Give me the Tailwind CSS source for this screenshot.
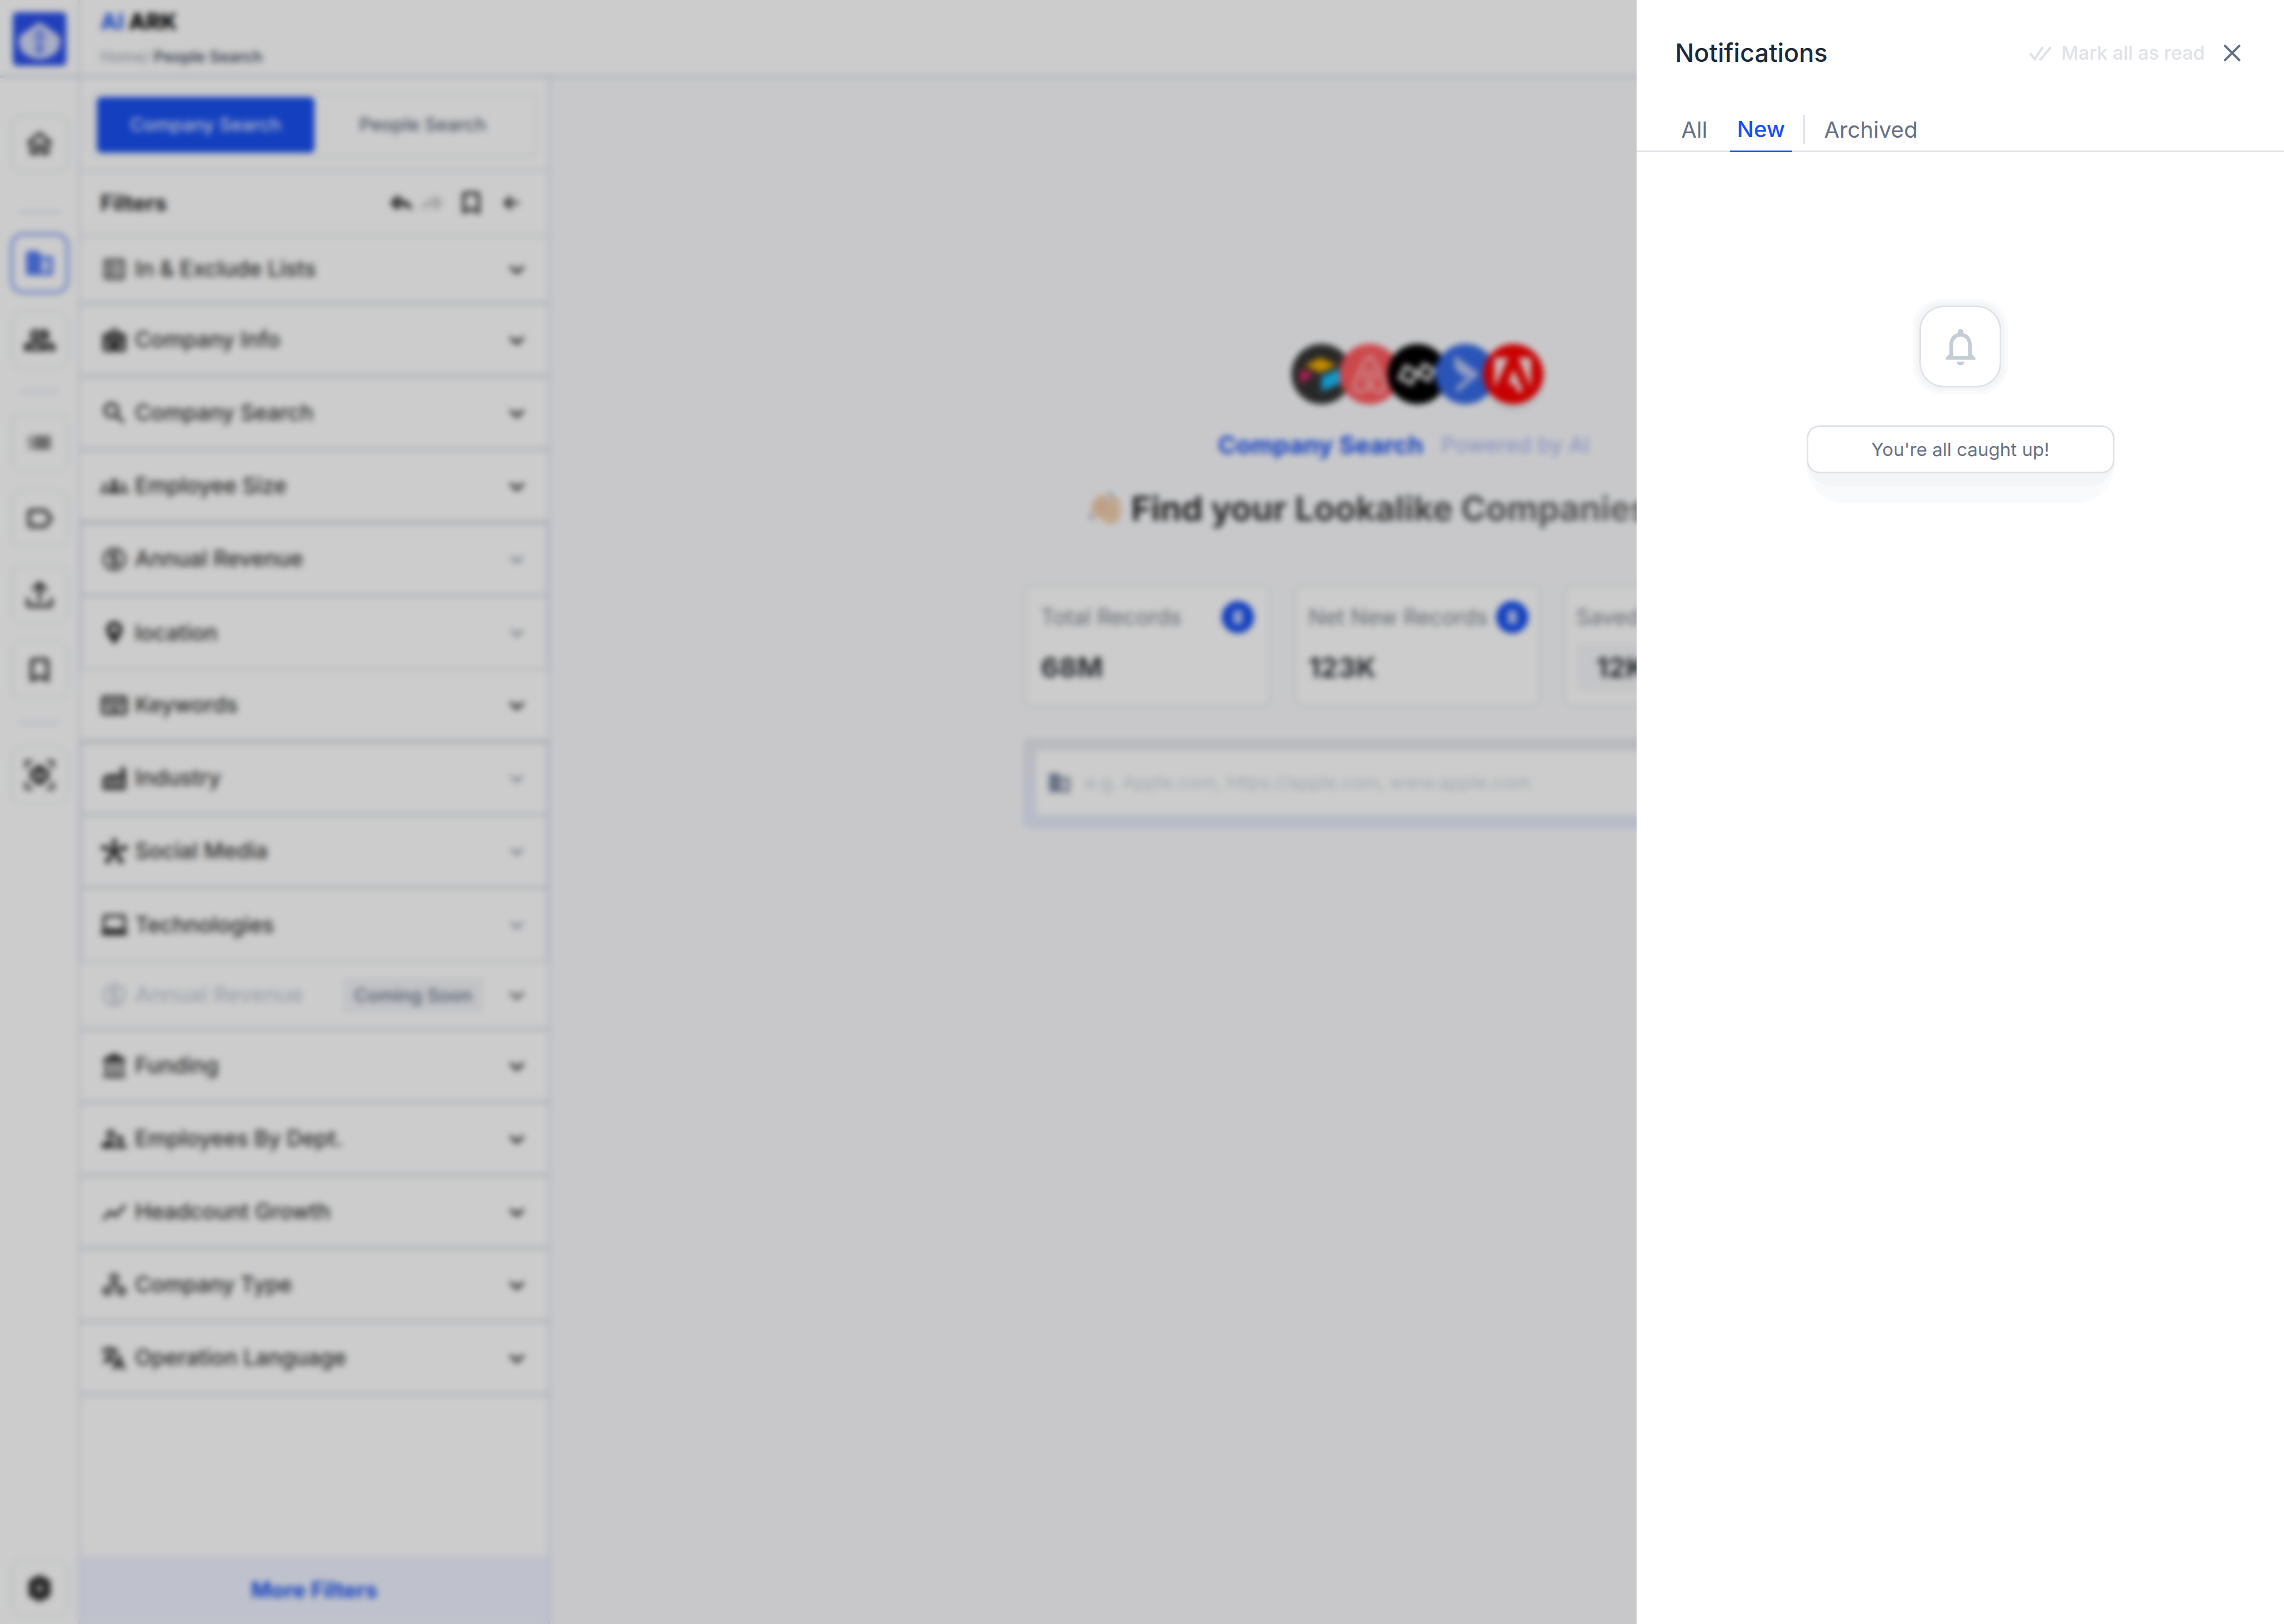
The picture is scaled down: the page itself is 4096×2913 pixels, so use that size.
<!DOCTYPE html>
<html lang="en">

<head>
  <meta charset="UTF-8">
  <meta name="viewport" content="width=device-width, initial-scale=1.0">
  <title>AI ARK - Notifications</title>
  <script src="https://cdn.jsdelivr.net/npm/@tailwindcss/browser@4"></script>
</head>

<body class="font-['Inter','Liberation_Sans',sans-serif] text-[#333]">
  <!-- Icon sprite -->
  <svg class="hidden" aria-hidden="true">
    <symbol id="i-home" viewBox="0 0 24 24"><path d="M12 5.700l5 4.500V18h-2v-6H9v6H7v-7.800l5-4.500M12 3L3 10.500V12h2v8h6v-6h2v6h6v-8h2v-1.500L12 3z" stroke="currentColor" stroke-width=".3"/></symbol>
    <symbol id="i-company" viewBox="0 0 24 24"><path d="M12 7V3H2v18h20V7H12zM6 19H4v-2h2v2zm0-4H4v-2h2v2zm0-4H4V9h2v2zm0-4H4V5h2v2zm4 12H8v-2h2v2zm0-4H8v-2h2v2zm0-4H8V9h2v2zm0-4H8V5h2v2zm10 12h-8v-2h2v-2h-2v-2h2v-2h-2V9h8v10zm-2-8h-2v2h2v-2zm0 4h-2v2h2v-2z"/></symbol>
    <symbol id="i-people" viewBox="0 0 24 24"><path d="M9 4a4 4 0 1 0 0 8 4 4 0 0 0 0-8zm0 2a2 2 0 1 1 0 4 2 2 0 0 1 0-4zm0 7c-3 0-9 1.500-9 4.500V20h18v-2.500C18 14.500 12 13 9 13zm-6.700 5c.5-1.200 3.700-3 6.700-3s6.200 1.800 6.700 3H2.300zM15 4c-.5 0-1 .1-1.400.3a6 6 0 0 1 0 7.400c.4.2.9.3 1.400.3a4 4 0 0 0 0-8zm2 9.300c1.700 1 3 2.300 3 4.200V20h4v-2.500c0-2.300-3.700-3.800-7-4.200z" stroke="currentColor" stroke-width=".8"/></symbol>
    <symbol id="i-list" viewBox="0 0 24 24"><path d="M3 13h2v-2H3v2zm0 4h2v-2H3v2zm0-8h2V7H3v2zm4 4h14v-2H7v2zm0 4h14v-2H7v2zM7 7v2h14V7H7z" stroke="currentColor" stroke-width=".3"/></symbol>
    <symbol id="i-tag" viewBox="0 0 24 24"><path d="M17.630 5.840C17.270 5.330 16.670 5 16 5L5 5.010C3.900 5.010 3 5.900 3 7v10c0 1.100.9 1.990 2 1.990L16 19c.67 0 1.270-.33 1.630-.84L22 12l-4.370-6.160zM16 17H5V7h11l3.550 5L16 17z" stroke="currentColor" stroke-width=".5"/></symbol>
    <symbol id="i-upload" viewBox="0 0 24 24"><path d="M20 15v5H4v-5H2v5c0 1.100.9 2 2 2h16c1.100 0 2-.9 2-2v-5h-2zM6 8l1.400 1.400L11 5.800V17h2V5.800l3.600 3.600L18 8l-6-6-6 6z" stroke="currentColor" stroke-width=".5"/></symbol>
    <symbol id="i-bookmark" viewBox="0 0 24 24"><path d="M17 3H7c-1.100 0-2 .9-2 2v16l7-3 7 3V5c0-1.100-.9-2-2-2zm0 15l-5-2.200L7 18V5h10v13z" stroke="currentColor" stroke-width=".6"/></symbol>
    <symbol id="i-scan" viewBox="0 0 24 24"><path d="M1 7V1h6v2H3v4H1zm16-6h6v6h-2V3h-4V1zM1 17h2v4h4v2H1v-6zm20 0h2v6h-6v-2h4v-4zM12 4.500a3 3 0 0 1 3 2.500l4 1v7l-7 5-7-5V8l4-1a3 3 0 0 1 3-2.500zm-4 5v4l3 2v-5L8 9.500zm8 0l-3 1v5l3-2v-4z" fill-rule="evenodd"/></symbol>
    <symbol id="i-settings" viewBox="0 0 24 24"><path d="M12 1.500l3.500 2 4 1.500 1 3.500v7l-1 3.500-4 1.500-3.500 2-3.500-2-4-1.500-1-3.500v-7l1-3.500 4-1.500 3.500-2zM12 10a2 2 0 1 0 0 4 2 2 0 0 0 0-4z" fill-rule="evenodd"/></symbol>
    <symbol id="i-chevron" viewBox="0 0 24 24"><path d="M5 9l7 6.500L19 9" fill="none" stroke="currentColor" stroke-width="3.400"/></symbol>
    <symbol id="i-lists" viewBox="0 0 24 24"><path d="M5 3h14c1.100 0 2 .9 2 2v14c0 1.100-.9 2-2 2H5c-1.100 0-2-.9-2-2V5c0-1.100.9-2 2-2zm0 2v14h14V5H5zm2 2h4v4H7V7zm6 0h4v2h-4V7zm0 4h4v2h-4v-2zm-6 2h4v4H7v-4zm6 2h4v2h-4v-2z" fill-rule="evenodd"/></symbol>
    <symbol id="i-case" viewBox="0 0 24 24"><path d="M8 6V4l2-2h4l2 2v2h4c1.100 0 2 .9 2 2v12c0 1.100-.9 2-2 2H4c-1.100 0-2-.9-2-2V8c0-1.100.9-2 2-2h4zm2 0h4V4h-4v2zM5 10v2h3v-2H5zm5.500 0v2h3v-2h-3zm5.500 0v2h3v-2h-3zM5 15v4h3v-4H5zm11 0v4h3v-4h-3z" fill-rule="evenodd"/></symbol>
    <symbol id="i-search" viewBox="0 0 24 24"><path d="M15.500 14h-.79l-.28-.27A6.470 6.470 0 0 0 16 9.500 6.500 6.500 0 1 0 9.500 16c1.610 0 3.090-.59 4.230-1.570l.27.28v.79l5 4.990L20.490 19l-4.990-5zm-6 0C7.010 14 5 11.990 5 9.500S7.010 5 9.500 5 14 7.010 14 9.500 11.990 14 9.500 14z" stroke="currentColor" stroke-width=".5"/></symbol>
    <symbol id="i-groups" viewBox="0 0 24 24"><path d="M12 6a3 3 0 1 1 0 6 3 3 0 0 1 0-6zm0 7c3 0 6 1.300 6 3.500V18H6v-1.500C6 14.300 9 13 12 13zM4 9a2 2 0 1 1 0 4 2 2 0 0 1 0-4zm16 0a2 2 0 1 1 0 4 2 2 0 0 1 0-4zM5 14a6 6 0 0 0-.5 2.500V18H0v-1.600C0 15 2 14 5 14zm14 0c3 0 5 1 5 2.400V18h-4.500v-1.500c0-.9-.2-1.800-.5-2.500z"/></symbol>
    <symbol id="i-dollar" viewBox="0 0 24 24"><path d="M12 2a10 10 0 1 0 0 20 10 10 0 0 0 0-20zm0 2a8 8 0 1 1 0 16 8 8 0 0 1 0-16z"/><path d="M15.500 8.500C15 7.500 13.700 7 12 7c-2 0-3.500.9-3.500 2.400 0 3.500 7 1.700 7 5.200 0 1.500-1.500 2.400-3.500 2.400-1.700 0-3-.5-3.500-1.500M12 5v14" fill="none" stroke="currentColor" stroke-width="1.800"/></symbol>
    <symbol id="i-pin" viewBox="0 0 24 24"><path d="M12 2C8.100 2 5 5.100 5 9c0 5.200 7 13 7 13s7-7.800 7-13c0-3.900-3.100-7-7-7zm0 4a3 3 0 1 1 0 6 3 3 0 0 1 0-6z" fill-rule="evenodd"/></symbol>
    <symbol id="i-keyboard" viewBox="0 0 24 24"><path d="M3 4h18c1.100 0 2 .9 2 2v12c0 1.100-.9 2-2 2H3c-1.100 0-2-.9-2-2V6c0-1.100.9-2 2-2zm0 2v12h18V6H3zm2 2h2v2H5V8zm4 0h2v2H9V8zm4 0h2v2h-2V8zm4 0h2v2h-2V8zM5 11h2v2H5v-2zm4 0h2v2H9v-2zm4 0h2v2h-2v-2zm4 0h2v2h-2v-2zm-9 4h8v1.500H8V15z" fill-rule="evenodd" stroke="currentColor" stroke-width=".6"/></symbol>
    <symbol id="i-factory" viewBox="0 0 24 24"><path d="M22 22H2V11l6-3v2l6-3v3h3l1-8h3l1 8v12zM5 12.500V19h2v-6.500H5zm4 0V19h2v-6.500H9zm4 0V19h2v-6.500h-2zm4 0V19h2v-6.500h-2z" fill-rule="evenodd"/></symbol>
    <symbol id="i-hub" viewBox="0 0 24 24"><path d="M12 12V3M12 12L3 8.500M12 12l9-3.500M12 12l-5.500 8M12 12l5.500 8" stroke="currentColor" stroke-width="3.400"/><circle cx="12" cy="3.500" r="2.500"/><circle cx="3" cy="9" r="2.500"/><circle cx="21" cy="9" r="2.500"/><circle cx="6.500" cy="20" r="2.700"/><circle cx="17.500" cy="20" r="2.700"/><circle cx="12" cy="12" r="3.500"/></symbol>
    <symbol id="i-laptop" viewBox="0 0 24 24"><path d="M22 17V5c0-1.100-.9-2-2-2H4c-1.100 0-2 .9-2 2v12H1v4h22v-4h-1zM4.500 5.500h15V15h-15V5.500z" fill-rule="evenodd"/></symbol>
    <symbol id="i-bank" viewBox="0 0 24 24"><path d="M12 1L2.500 6v3h19V6L12 1zM4 10.500h3V17H4zM10.500 10.500h3V17h-3zM17 10.500h3V17h-3zM2.500 19h19v3h-19z"/></symbol>
    <symbol id="i-dept" viewBox="0 0 24 24"><path d="M9 4a4 4 0 1 1 0 8 4 4 0 0 1 0-8zm0 2.500a1.500 1.500 0 1 0 0 3 1.500 1.500 0 0 0 0-3zM17 9a3 3 0 1 1 0 6 3 3 0 0 1 0-6zM9 13.500c1.200 0 2.300.2 3.300.5-.9.900-1.300 2-1.300 3V20H1v-2.500c0-2.700 5-4 8-4zm8 2.500c2.500 0 6 1.200 6 3v1H12v-1c0-1.800 2.500-3 5-3z" fill-rule="evenodd"/></symbol>
    <symbol id="i-growth" viewBox="0 0 24 24"><path d="M2.500 18.500l6.500-7 4 4L21.500 6" fill="none" stroke="currentColor" stroke-width="2.400"/></symbol>
    <symbol id="i-type" viewBox="0 0 24 24"><circle cx="12" cy="6" r="3.200" fill="none" stroke="currentColor" stroke-width="2.200"/><circle cx="6" cy="17" r="3" fill="none" stroke="currentColor" stroke-width="2.400"/><circle cx="18" cy="17" r="3" fill="none" stroke="currentColor" stroke-width="2.400"/><path d="M12 9v4M8 14l4-3 4 3" fill="none" stroke="currentColor" stroke-width="1.800"/></symbol>
    <symbol id="i-lang" viewBox="0 0 24 24"><path d="M1 5h14M8 2v3M12.500 5c-1 5-5 9-10 11M4.500 8c1.500 3.500 4 6 7 7.500M11.500 22l4.500-11 4.500 11M13 18.500h6" fill="none" stroke="currentColor" stroke-width="2.600"/></symbol>
    <symbol id="i-reply" viewBox="0 0 24 24"><path d="M9 5v4l-4.500 3L9 16v-3c4 0 8 1 12 5-2-5-6-8-12-9M7 6l-5 6 5 6" fill="none" stroke="currentColor" stroke-width="2.400"/></symbol>
    <symbol id="i-back" viewBox="0 0 24 24"><path d="M21 12H5M12 4.500L4.500 12l7.500 7.500" fill="none" stroke="currentColor" stroke-width="3.400"/></symbol>
    <symbol id="i-info" viewBox="0 0 24 24"><path d="M12 7v10" stroke="currentColor" stroke-width="7"/></symbol>
  </svg>

  <div class="flex min-h-screen w-full overflow-hidden bg-[#fafbfe]">
    <!-- Icon rail -->
    <nav class="flex w-[144px] shrink-0 flex-col items-center border-r-3 border-[#dcdff5] bg-white pb-3">
      <div class="flex h-[140px] w-full justify-center border-b-6 border-[#dfe3ee] pt-[22px]">
        <a href="#" aria-label="AI ARK" class="h-24 w-24 rounded-lg bg-[#294fea]">
          <svg class="size-full" viewBox="0 0 24 24">
            <path d="M12 5l8.500 6c.8 3-.2 6-2.500 7.500-2 1.300-4 2-6 2s-4-.7-6-2C3.700 17 2.700 14 3.500 11L12 5z" fill="#d5dbf8" stroke="#d5dbf8" stroke-linejoin="round" />
            <path d="M12 7v12M12 8l-2.500 3 2.500 2 2.500-2L12 8zM12 14l-2 2.500 2 2 2-2-2-2.500z" fill="none" stroke="#5a78ee" stroke-width=".8" />
          </svg>
        </a>
      </div>
      <button aria-label="Home" class="mt-[66px] flex size-[104px] items-center justify-center rounded-[20px] border-3 border-[#ecf0f2]"><svg class="size-[58px] fill-current"><use href="#i-home" /></svg></button>
      <hr class="mt-[68px] mb-[35px] w-18 border-t-4 border-[#dfe4f8]">
      <button aria-label="Company" class="flex h-[110px] w-[106px] items-center justify-center rounded-[24px] border-6 border-[#94abf7] text-[#1950f0]"><svg class="size-14 fill-current"><use href="#i-company" /></svg></button>
      <button aria-label="People" class="mt-[31px] flex size-[104px] items-center justify-center rounded-[20px] border-3 border-[#ecf0f2]"><svg class="size-14 fill-current"><use href="#i-people" /></svg></button>
      <hr class="my-[38px] w-18 border-t-4 border-[#dfe4f8]">
      <div class="flex flex-col gap-8">
        <button aria-label="Lists" class="flex size-[104px] items-center justify-center rounded-[20px] border-3 border-[#ecf0f2]"><svg class="size-[52px] fill-current"><use href="#i-list" /></svg></button>
        <button aria-label="Tags" class="flex size-[104px] items-center justify-center rounded-[20px] border-3 border-[#ecf0f2]"><svg class="size-14 fill-current"><use href="#i-tag" /></svg></button>
        <button aria-label="Export" class="flex size-[104px] items-center justify-center rounded-[20px] border-3 border-[#ecf0f2]"><svg class="size-14 fill-current"><use href="#i-upload" /></svg></button>
        <button aria-label="Saved" class="flex size-[104px] items-center justify-center rounded-[20px] border-3 border-[#ecf0f2]"><svg class="size-14 fill-current"><use href="#i-bookmark" /></svg></button>
      </div>
      <hr class="my-10 w-18 border-t-4 border-[#dfe4f8]">
      <button aria-label="Scan" class="flex size-[104px] items-center justify-center rounded-[20px] border-3 border-[#ecf0f2]"><svg class="size-[58px] fill-current"><use href="#i-scan" /></svg></button>
      <button aria-label="Settings" class="mt-auto flex size-[104px] items-center justify-center rounded-[20px] border-3 border-[#ecf0f2]"><svg class="size-14 fill-current"><use href="#i-settings" /></svg></button>
    </nav>

    <div class="flex grow flex-col">
      <header class="flex h-[140px] flex-col justify-between border-b-6 border-[#dfe3ee] bg-white pt-4 pb-3 pl-9">
        <p class="text-[40px] leading-[46px] font-extrabold text-black"><span class="text-[#2f62f0]">AI</span> ARK</p>
        <p class="text-[28px] leading-[40px] font-semibold text-[#475467]"><a href="#" class="font-normal text-[#98a2b3]">Home/</a> People Search</p>
      </header>

      <div class="flex grow">
        <!-- Filters -->
        <aside class="flex w-[843px] shrink-0 flex-col border-r-4 border-[#dcdff5] bg-white text-[39px] font-medium">
          <div class="border-b-3 border-[#dfe3ee] px-[22px] pt-[26px] pb-[22px]">
            <div class="flex h-[116px] rounded-lg border-3 border-[#ecf0f2] p-[5px] text-[33px]">
              <button class="flex-1 rounded-lg bg-[#1950f0] text-[#e8edff]">Company Search</button>
              <button class="flex-1 text-[#5d677b]">People Search</button>
            </div>
          </div>
          <div class="flex h-[117px] items-center border-b-3 border-[#dfe3e8] pr-12 pl-9">
            <h2 class="text-[39px] font-bold text-[#222]">Filters</h2>
            <button aria-label="Undo" class="ml-auto"><svg class="size-11"><use href="#i-reply" /></svg></button>
            <button aria-label="Redo" class="ml-2"><svg class="size-11 -scale-x-100 text-[#ccc]"><use href="#i-reply" /></svg></button>
            <button aria-label="Saved filters" class="ml-6"><svg class="size-13 fill-current"><use href="#i-bookmark" /></svg></button>
            <button aria-label="Collapse" class="ml-7"><svg class="size-9"><use href="#i-back" /></svg></button>
          </div>

          <button class="flex h-[123px] w-full items-center gap-3 border-b-6 border-[#dfe3e8] px-9"><svg class="size-[50px] fill-current"><use href="#i-lists" /></svg>In &amp; Exclude Lists<svg class="ml-auto size-10"><use href="#i-chevron" /></svg></button>
          <button class="flex h-[131px] w-full items-center gap-3 border-b-6 border-[#dfe3e8] px-9"><svg class="size-[50px] fill-current"><use href="#i-case" /></svg>Company Info<svg class="ml-auto size-10"><use href="#i-chevron" /></svg></button>
          <button class="flex h-[131px] w-full items-center gap-3 border-b-6 border-[#dfe3e8] px-9"><svg class="size-[50px] fill-current"><use href="#i-search" /></svg>Company Search<svg class="ml-auto size-10"><use href="#i-chevron" /></svg></button>
          <button class="flex h-[131px] w-full items-center gap-3 border-b-6 border-[#d3d7de] px-9"><svg class="size-[50px] fill-current"><use href="#i-groups" /></svg>Employee Size<svg class="ml-auto size-10"><use href="#i-chevron" /></svg></button>
          <button class="flex h-[131px] w-full items-center gap-3 border-x-3 border-b-6 border-x-[#e2e2f2] border-b-[#dfe3e8] px-[33px]"><svg class="size-[50px] fill-current"><use href="#i-dollar" /></svg>Annual Revenue<svg class="ml-auto size-10 scale-90 text-[#98a2b3]"><use href="#i-chevron" /></svg></button>
          <button class="flex h-[131px] w-full items-center gap-3 border-x-3 border-b-3 border-x-[#e2e2f2] border-b-[#dfe3e8] px-[33px]"><svg class="size-[50px] fill-current"><use href="#i-pin" /></svg>location<svg class="ml-auto size-10 scale-90 text-[#98a2b3]"><use href="#i-chevron" /></svg></button>
          <button class="flex h-[131px] w-full items-center gap-3 border-b-6 border-[#d3d7de] px-9"><svg class="size-[50px] fill-current"><use href="#i-keyboard" /></svg>Keywords<svg class="ml-auto size-10"><use href="#i-chevron" /></svg></button>
          <button class="flex h-[131px] w-full items-center gap-3 border-x-3 border-b-6 border-x-[#e2e2f2] border-b-[#dfe3e8] px-[33px]"><svg class="size-[50px] fill-current"><use href="#i-factory" /></svg>Industry<svg class="ml-auto size-10 scale-90 text-[#98a2b3]"><use href="#i-chevron" /></svg></button>
          <button class="flex h-[131px] w-full items-center gap-3 border-x-3 border-b-6 border-x-[#e2e2f2] border-b-[#dfe3e8] px-[33px]"><svg class="size-[50px] fill-current"><use href="#i-hub" /></svg>Social Media<svg class="ml-auto size-10 scale-90 text-[#98a2b3]"><use href="#i-chevron" /></svg></button>
          <button class="flex h-[131px] w-full items-center gap-3 border-x-3 border-b-3 border-x-[#e2e2f2] border-b-[#dfe3e8] px-[33px]"><svg class="size-[50px] fill-current"><use href="#i-laptop" /></svg>Technologies<svg class="ml-auto size-10 scale-90 text-[#98a2b3]"><use href="#i-chevron" /></svg></button>
          <button class="flex h-[123px] w-full items-center gap-3 border-b-6 border-[#dfe3e8] px-9 text-[#c4ccd6]"><svg class="size-[50px] fill-current"><use href="#i-dollar" /></svg>Annual Revenue<span class="ml-auto rounded-lg bg-[#f2f4f8] px-5 py-2 text-[33px] leading-[46px] text-[#667085]">Coming Soon</span><svg class="ml-7 size-10 text-[#777]"><use href="#i-chevron" /></svg></button>
          <button class="flex h-[131px] w-full items-center gap-3 border-b-6 border-[#dfe3e8] px-9"><svg class="size-[50px] fill-current"><use href="#i-bank" /></svg>Funding<svg class="ml-auto size-10"><use href="#i-chevron" /></svg></button>
          <button class="flex h-[131px] w-full items-center gap-3 border-b-6 border-[#dfe3e8] px-9"><svg class="size-[50px] fill-current"><use href="#i-dept" /></svg>Employees By Dept.<svg class="ml-auto size-10"><use href="#i-chevron" /></svg></button>
          <button class="flex h-[131px] w-full items-center gap-3 border-b-6 border-[#dfe3e8] px-9"><svg class="size-[50px] fill-current"><use href="#i-growth" /></svg>Headcount Growth<svg class="ml-auto size-10"><use href="#i-chevron" /></svg></button>
          <button class="flex h-[131px] w-full items-center gap-3 border-b-6 border-[#dfe3e8] px-9"><svg class="size-[50px] fill-current"><use href="#i-type" /></svg>Company Type<svg class="ml-auto size-10"><use href="#i-chevron" /></svg></button>
          <button class="flex h-[131px] w-full items-center gap-3 border-b-6 border-[#dfe3e8] px-9"><svg class="size-[50px] fill-current"><use href="#i-lang" /></svg>Operation Language<svg class="ml-auto size-10"><use href="#i-chevron" /></svg></button>

          <button class="mt-auto h-[122px] w-full bg-[#eff3ff] text-[39px] font-bold text-[#1950f0]">More Filters</button>
        </aside>

        <!-- Company search -->
        <main class="flex grow flex-col items-center pt-[477px]">
          <div class="flex -space-x-[22px]">
            <svg class="size-[108px]" viewBox="0 0 48 48"><circle cx="24" cy="24" r="24" fill="#333" /><path d="M11 17l12-6 13 6-13 6z" fill="#f5b000" /><path d="M7 20l11 4-11 8z" fill="#e0266a" /><path d="M24 26l16-7v12l-16 7z" fill="#18bfff" /></svg>
            <svg class="size-[108px]" viewBox="0 0 48 48"><circle cx="24" cy="24" r="24" fill="#ff5a5f" /><path d="M24 10c3 0 12 20 12 24 0 6-7 6-12-1-5 7-12 7-12 1 0-4 9-24 12-24zm0 12c-6 0-4 7 0 11 4-4 6-11 0-11z" fill="none" stroke="#ffc5c7" stroke-width="3" stroke-opacity=".7" /></svg>
            <svg class="size-[108px]" viewBox="0 0 48 48"><circle cx="24" cy="24" r="24" fill="#000" /><path d="M13 23h10v10H13zM25 15h9v9h-9z" fill="none" stroke="#d5d5d5" stroke-width="3.500" transform="rotate(28 24 24)" /></svg>
            <svg class="size-[108px]" viewBox="0 0 48 48"><circle cx="24" cy="24" r="24" fill="#356ae6" /><path d="M15 9l20 15-18 15v-5l12-10-6 2-7-6z" fill="#bccaf4" /></svg>
            <svg class="size-[108px] rounded-full shadow-lg" viewBox="0 0 48 48"><circle cx="24" cy="24" r="24" fill="#fa0000" /><path d="M20 11H9v24zM28 11h10v24zM24 20l8 18h-5l-2-6h-5z" fill="#fff" fill-opacity=".95" /></svg>
          </div>
          <p class="mt-[43px] flex items-center gap-8 pr-[48px] text-[44px] leading-[60px] font-bold text-[#1950f0]">Company Search <span class="text-[39px] font-normal text-[#a5b0ee]">Powered by AI</span></p>
          <div class="mt-[44px] flex w-[1182px] items-center gap-4">
            <svg class="size-[62px]" viewBox="0 0 24 24"><path d="M2 10L8 2l4 1 3 5 4-4 3 2 1 11-3 5-6 1L3 15z" fill="#f2cfae" /><path d="M4 9l6 7M7 6l6 7M11 4l5 7" stroke="#dfb28c" stroke-width="1" /><path d="M14 1l4 4M1 16l3 4" stroke="#888" stroke-width="1.500" /></svg>
            <h1 class="bg-linear-to-r from-[#222] to-[#777] bg-clip-text text-[61px] leading-[80px] font-bold whitespace-nowrap text-transparent">Find your Lookalike Companies</h1>
          </div>

          <div class="mt-[96px] grid w-[1412px] grid-cols-3 gap-10">
            <div class="h-[220px] rounded-2xl border-3 border-[#e3e7ea] bg-white pt-6 pr-7 pl-7">
              <p class="flex items-center justify-between text-[39px] leading-[64px] text-[#7b848f]">Total Records <button aria-label="About total records" class="size-[58px] rounded-full bg-[#1950f0] text-[#b8c8ff]"><svg class="size-full"><use href="#i-info" /></svg></button></p>
              <p class="mt-[26px] text-[50px] leading-[64px] font-bold text-[#33383f]">68M</p>
            </div>
            <div class="h-[220px] rounded-2xl border-3 border-[#e3e7ea] bg-white pt-6 pr-5 pl-6">
              <p class="flex items-center justify-between text-[39px] leading-[64px] whitespace-nowrap text-[#7b848f]">Net New Records <button aria-label="About net new records" class="size-[58px] rounded-full bg-[#1950f0] text-[#b8c8ff]"><svg class="size-full"><use href="#i-info" /></svg></button></p>
              <p class="mt-[26px] text-[50px] leading-[64px] font-bold text-[#33383f]">123K</p>
            </div>
            <div class="h-[220px] rounded-2xl border-3 border-[#e3e7ea] bg-white pt-6 pl-5">
              <p class="text-[39px] leading-[64px] text-[#7b848f]">Saved</p>
              <p class="mt-4 w-[200px] rounded-lg bg-[#f6f7fa] py-[10px] pl-9 text-[50px] leading-[64px] font-bold text-[#33383f]">12K</p>
            </div>
          </div>

          <div class="mt-[56px] w-[1416px] rounded-xl bg-linear-to-b from-[#e8e9ef] to-[#e5ebfb] p-6 pt-[22px]">
            <label class="flex h-[116px] items-center gap-6 rounded-lg bg-white px-5 text-[#5c6b8c]">
              <svg class="size-11 shrink-0 fill-current"><use href="#i-company" /></svg>
              <input type="text" aria-label="Company" placeholder="e.g. Apple.com, https://apple.com, www.apple.com" class="w-full text-[33px] placeholder:text-[#ced4db]">
            </label>
          </div>
        </main>
      </div>
    </div>
  </div>

  <!-- Overlay + drawer -->
  <div class="fixed inset-0 bg-black/20 backdrop-blur-[6px]"></div>

  <section class="fixed inset-y-0 right-0 flex w-[1161px] flex-col bg-white text-[#667085]">
    <div class="flex items-center pt-[63px] pr-16 pl-[69px]">
      <h2 class="text-[45px] leading-[64px] font-medium text-[#1d2939]">Notifications</h2>
      <button class="ml-auto flex items-center gap-4 text-[34px] leading-[48px] font-medium text-[#dfe2e7]">
        <svg class="size-11" viewBox="0 0 24 24" fill="none" stroke="currentColor" stroke-width="2.400" stroke-linecap="round"><path d="M2.500 13l4 5L14 7M12 18.200h.5L21.500 7" /></svg>
        Mark all as read
      </button>
      <button aria-label="Close" class="ml-5 flex size-[58px] items-center justify-center">
        <svg class="size-[34px]" viewBox="0 0 34 34" fill="none" stroke="#667085" stroke-width="4"><path d="M3 3l28 28M31 3L3 31" /></svg>
      </button>
    </div>
    <div class="mt-[66px] flex h-20 items-start border-b-3 border-[#dfe2e8] pl-[66px] text-[40px] leading-[78px]">
      <button class="h-20 px-[14px]">All</button>
      <button class="ml-[26px] h-20 border-b-3 border-[#1950f5] px-[13px] font-medium text-[#1950f5]">New</button>
      <span class="mt-[13px] ml-5 h-[52px] w-[3px] bg-[#dfe2e8]"></span>
      <button class="ml-5 h-20 px-[14px]">Archived</button>
    </div>
    <div class="flex flex-col items-center pt-[263px]">
      <!-- bell inside two soft rings -->
      <div class="rounded-[52px] bg-[#f9fafc] p-[6px]">
        <div class="rounded-[48px] bg-[#f4f5f7] p-[6px]">
          <div class="flex size-[147px] items-center justify-center rounded-[44px] border-3 border-[#dfe2e8] bg-white">
            <svg class="size-20" viewBox="0 0 24 24" fill="#c4ccd6"><path d="M12 22c1.100 0 2-.9 2-2h-4c0 1.100.9 2 2 2zm6-6v-5c0-3.070-1.630-5.640-4.500-6.320V4c0-.83-.67-1.500-1.500-1.500s-1.500.67-1.500 1.500v.68C7.640 5.360 6 7.920 6 11v5l-2 2v1h16v-1l-2-2zm-2 1H8v-6c0-2.480 1.510-4.500 4-4.500s4 2.020 4 4.500v6z" /></svg>
          </div>
        </div>
      </div>
      <div class="mt-14 w-[552px] rounded-t-[24px] rounded-b-[70px] bg-[#f9fafc] pb-[31px]">
        <div class="rounded-t-[24px] rounded-b-[46px] bg-[#f4f5f7] pb-[23px]">
          <p class="rounded-[23px] border-3 border-[#dfe2e8] bg-white text-center text-[33px] leading-[80px]">You're all caught up!</p>
        </div>
      </div>
    </div>
  </section>
</body>

</html>
